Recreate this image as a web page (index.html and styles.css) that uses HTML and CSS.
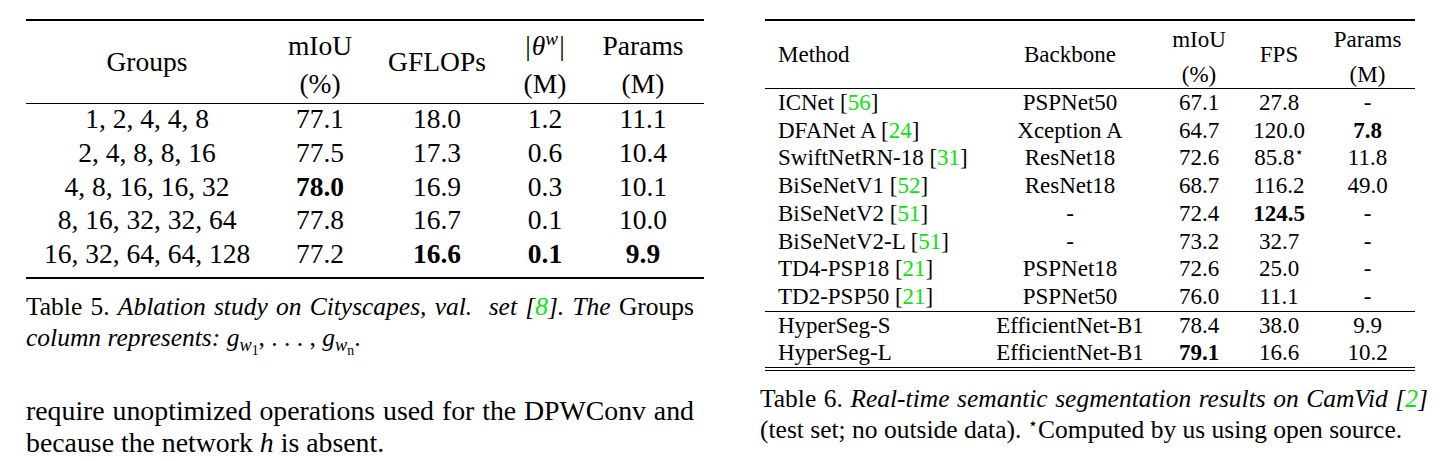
FILE: index.html
```html
<!DOCTYPE html>
<html lang="en">
<head>
<meta charset="utf-8">
<title>Tables 5 and 6</title>
<link rel="stylesheet" href="styles.css">
</head>
<body>
<div class="page">
  <section class="left">
    <table class="t5">
      <colgroup>
        <col class="w242"><col class="w104"><col class="w130"><col class="w86"><col class="w116">
      </colgroup>
      <thead>
        <tr>
          <th>Groups</th>
          <th><div class="two">mIoU<br>(%)</div></th>
          <th>GFLOPs</th>
          <th><div class="two"><span class="bar">|</span><i class="theta">θ</i><sup class="sw">w</sup><span class="bar">|</span><br>(M)</div></th>
          <th class="pr"><div class="two">Params<br>(M)</div></th>
        </tr>
      </thead>
      <tbody>
        <tr><td>1, 2, 4, 4, 8</td><td>77.1</td><td>18.0</td><td>1.2</td><td class="pr">11.1</td></tr>
        <tr><td>2, 4, 8, 8, 16</td><td>77.5</td><td>17.3</td><td>0.6</td><td class="pr">10.4</td></tr>
        <tr><td>4, 8, 16, 16, 32</td><td class="b">78.0</td><td>16.9</td><td>0.3</td><td class="pr">10.1</td></tr>
        <tr><td>8, 16, 32, 32, 64</td><td>77.8</td><td>16.7</td><td>0.1</td><td class="pr">10.0</td></tr>
        <tr class="last"><td>16, 32, 64, 64, 128</td><td>77.2</td><td class="b">16.6</td><td class="b">0.1</td><td class="pr b">9.9</td></tr>
      </tbody>
    </table>
    <div class="cap cap5">
      <div class="jl">Table 5. <i>Ablation study on Cityscapes, val.&nbsp; set [<span class="cite">8</span>]. The</i> Groups</div>
      <div><i>column represents: </i><span class="m">g<sub>w<sub>1</sub></sub></span>, . . . , <span class="m">g<sub>w<sub>n</sub></sub></span>.</div>
    </div>
    <div class="body">
      <div class="jl">require unoptimized operations used for the DPWConv and</div>
      <div>because the network <i>h</i> is absent.</div>
    </div>
  </section>

  <section class="right">
    <table class="t6">
      <colgroup>
        <col class="w215"><col class="w180"><col class="w78"><col class="w82"><col class="w95">
      </colgroup>
      <thead>
        <tr>
          <th class="meth">Method</th>
          <th>Backbone</th>
          <th><div class="two">mIoU<br>(%)</div></th>
          <th>FPS</th>
          <th><div class="two">Params<br>(M)</div></th>
        </tr>
      </thead>
      <tbody>
        <tr><td class="meth">ICNet [<span class="cite">56</span>]</td><td>PSPNet50</td><td>67.1</td><td>27.8</td><td>-</td></tr>
        <tr><td class="meth">DFANet A [<span class="cite">24</span>]</td><td>Xception A</td><td>64.7</td><td>120.0</td><td class="b">7.8</td></tr>
        <tr><td class="meth">SwiftNetRN-18 [<span class="cite">31</span>]</td><td>ResNet18</td><td>72.6</td><td>85.8<span class="star">⋆</span></td><td>11.8</td></tr>
        <tr><td class="meth">BiSeNetV1 [<span class="cite">52</span>]</td><td>ResNet18</td><td>68.7</td><td>116.2</td><td>49.0</td></tr>
        <tr><td class="meth">BiSeNetV2 [<span class="cite">51</span>]</td><td>-</td><td>72.4</td><td class="b">124.5</td><td>-</td></tr>
        <tr><td class="meth">BiSeNetV2-L [<span class="cite">51</span>]</td><td>-</td><td>73.2</td><td>32.7</td><td>-</td></tr>
        <tr><td class="meth">TD4-PSP18 [<span class="cite">21</span>]</td><td>PSPNet18</td><td>72.6</td><td>25.0</td><td>-</td></tr>
        <tr class="sep"><td class="meth">TD2-PSP50 [<span class="cite">21</span>]</td><td>PSPNet50</td><td>76.0</td><td>11.1</td><td>-</td></tr>
        <tr><td class="meth">HyperSeg-S</td><td>EfficientNet-B1</td><td>78.4</td><td>38.0</td><td>9.9</td></tr>
        <tr class="end"><td class="meth">HyperSeg-L</td><td>EfficientNet-B1</td><td class="b">79.1</td><td>16.6</td><td>10.2</td></tr>
      </tbody>
    </table>
    <div class="cap cap6">
      <div class="jl">Table 6. <i>Real-time semantic segmentation results on CamVid [<span class="cite">2</span>]</i></div>
      <div>(test set; no outside data). <span class="star">⋆</span>Computed by us using open source.</div>
    </div>
  </section>
</div>
</body>
</html>
```
FILE: styles.css
```css
html, body {
  margin: 0;
  background: #fff;
}
body {
  color: #000;
  font-family: "Liberation Serif", "Times New Roman", serif;
}
.page {
  display: flex;
  align-items: flex-start;
  padding: 19px 0 0 26px;
}
.left { width: 678px; }
.right { width: 668px; margin-left: 56px; }

table {
  border-collapse: separate;
  border-spacing: 0;
  table-layout: fixed;
}
th { font-weight: normal; padding: 0; }
td { padding: 0; text-align: center; white-space: nowrap; }
.b { font-weight: bold; }
.cite { color: #10e010; }

.w242 { width: 242px; }
.w104 { width: 104px; }
.w130 { width: 130px; }
.w86 { width: 86px; }
.w116 { width: 116px; }
.w215 { width: 215px; }
.w180 { width: 180px; }
.w78 { width: 78px; }
.w82 { width: 82px; }
.w95 { width: 95px; }

/* Table 5 */
.t5 {
  width: 678px;
  font-size: 27.5px;
}
.t5 th {
  border-top: 2px solid #000;
  border-bottom: 1px solid #000;
  line-height: 38px;
  vertical-align: middle;
  text-align: center;
}
.t5 th .two {
  height: 82px;
  box-sizing: border-box;
  padding-top: 6px;
}
.t5 td {
  line-height: 29.8px;
  padding-bottom: 4px;
}
.t5 .pr { padding-right: 6px; }
.t5 tr.last td {
  padding-bottom: 8px;
  border-bottom: 2px solid #000;
}
.bar { font-style: normal; }
.theta { margin-left: 1px; }
.sw {
  font-style: italic;
  font-size: 0.7em;
  line-height: 0;
  vertical-align: 0.5em;
  margin-right: 1px;
}

/* Table 6 */
.t6 {
  width: 650px;
  margin-left: 5px;
  font-size: 23px;
}
.t6 th {
  border-top: 2px solid #000;
  border-bottom: 1px solid #000;
  line-height: 35px;
  vertical-align: middle;
  text-align: center;
}
.t6 th .two {
  height: 67px;
  box-sizing: border-box;
  padding-top: 1px;
}
.t6 td { line-height: 27.7px; }
.t6 .meth { text-align: left; padding-left: 13px; }
.t6 tr.sep td { border-bottom: 1px solid #000; }
.t6 tr.end td { border-bottom: 4px double #000; }

.star {
  font-family: "DejaVu Sans", sans-serif;
  font-size: 0.65em;
  line-height: 0;
  vertical-align: 0.55em;
}

/* captions & text */
.cap {
  font-size: 25.5px;
  line-height: 31px;
}
.cap5 { width: 668px; margin-top: 12px; }
.cap6 { margin-top: 12px; }
.jl {
  text-align: justify;
  text-align-last: justify;
}
.m { font-style: italic; }
.m sub {
  font-size: 0.72em;
  line-height: 0;
  vertical-align: -0.25em;
}
.m sub sub {
  font-style: normal;
  font-size: 0.75em;
  vertical-align: -0.3em;
}
.body {
  width: 668px;
  margin-top: 42px;
  font-size: 27.8px;
  line-height: 32px;
}
```
